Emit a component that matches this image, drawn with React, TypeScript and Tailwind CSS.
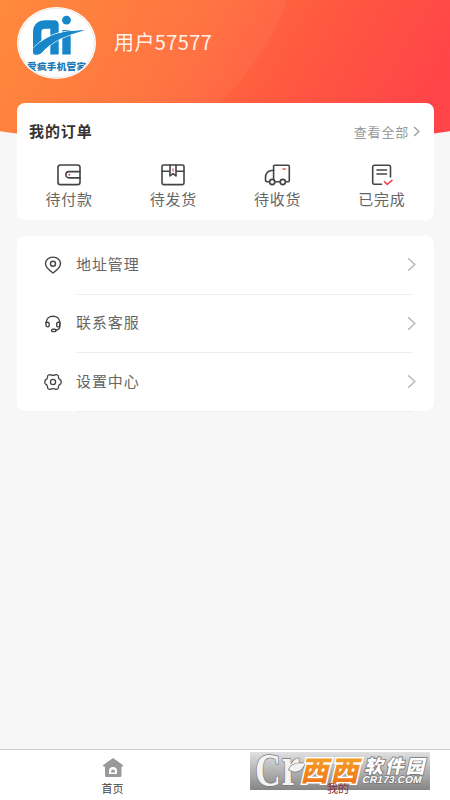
import type { ReactNode } from "react";

interface Item {
  label: string;
  icon: ReactNode;
}

const iconProps = {
  fill: "none",
  stroke: "#444",
  strokeWidth: 1.6,
  strokeLinecap: "round" as const,
  strokeLinejoin: "round" as const,
};

const orders: Item[] = [
  {
    label: "待付款",
    icon: (
      <svg width="26" height="24" viewBox="0 0 26 24" {...iconProps}>
        <rect x="2" y="2" width="22" height="19.6" rx="2.4" />
        <path d="M24 8.600H13a3.100 3.100 0 0 0 0 6.300h11" />
        <circle cx="13.3" cy="11.8" r="1" fill="#e5484d" stroke="none" />
      </svg>
    ),
  },
  {
    label: "待发货",
    icon: (
      <svg width="26" height="24" viewBox="0 0 26 24" {...iconProps}>
        <rect x="2" y="2" width="22" height="19.6" rx="1.6" />
        <path d="M2 8.200h8M16 8.200h8M10 2v11l3-2.400 3 2.400V2" />
        <path d="M13 6v2" stroke="#ef7a7d" />
      </svg>
    ),
  },
  {
    label: "待收货",
    icon: (
      <svg width="27" height="24" viewBox="0 0 27 24" {...iconProps}>
        <path d="M9.600 16.500V3.200a1 1 0 0 1 1-1h13.700a1 1 0 0 1 1 1v14.200a1.400 1.400 0 0 1-1.400 1.400h-1.800M16 18.800h-4.600" />
        <path d="M9.600 7.500H7.400C3.600 8 1.500 11 1.500 14.800v2.500c0 1 .6 1.500 2.500 1.500h1.200" />
        <circle cx="8.2" cy="19" r="2.6" />
        <circle cx="18.8" cy="19" r="2.6" />
        <path d="M19 6h2.200" stroke="#ef5357" />
      </svg>
    ),
  },
  {
    label: "已完成",
    icon: (
      <svg width="24" height="24" viewBox="0 0 24 24" {...iconProps}>
        <path d="M11.500 21.200H4.400a1.700 1.700 0 0 1-1.700-1.700V4a1.700 1.700 0 0 1 1.700-1.700h14.400A1.700 1.700 0 0 1 20.500 4v10" />
        <path d="M7 7h9.500M7 11h9.500" />
        <path d="m14.500 18.800 2.800 2.600 4.700-4" stroke="#ea4a4f" />
      </svg>
    ),
  },
];

const menu: Item[] = [
  {
    label: "地址管理",
    icon: (
      <svg width="18" height="18" viewBox="0 0 18 18" {...iconProps} strokeWidth={1.4}>
        <path d="M9 17C5.800 14.800 1.500 11.500 1.500 7.600 1.500 3.800 4.800 1.100 9 1.100s7.500 2.700 7.500 6.500C16.500 11.500 12.200 14.800 9 17Z" />
        <circle cx="9" cy="7.8" r="2.5" />
      </svg>
    ),
  },
  {
    label: "联系客服",
    icon: (
      <svg width="18" height="18" viewBox="0 0 18 18" {...iconProps} strokeWidth={1.4}>
        <path d="M2.200 8V7.200C2.500 3.600 5.300 1.200 9 1.200s6.500 2.400 6.800 6V11.600c0 2.300-1.500 3.500-4.200 3.700" />
        <path d="M2 7.200h1.600c1.100 0 1.600.6 1.600 1.600v1.600c0 1-.5 1.500-1.500 1.500S2 11.400 2 10.200Z" />
        <path d="M15.900 7.200h-1.600c-1.100 0-1.600.6-1.600 1.600v1.600c0 1 .5 1.500 1.500 1.500s1.700-.5 1.700-1.700Z" />
        <rect x="7.6" y="14.2" width="4.4" height="2.4" rx="1.2" />
      </svg>
    ),
  },
  {
    label: "设置中心",
    icon: (
      <svg width="18" height="18" viewBox="0 0 18 18" {...iconProps} strokeWidth={1.3}>
        <path d="M5.200 1.700c1.100-.5 1.700.7 3.800.7s2.700-1.200 3.800-.7l1.300.8c.8.800-.1 1.900.8 3.200.7 1.100 2.200 1 2.200 2.300v2c0 1.300-1.500 1.200-2.200 2.300-.9 1.300 0 2.400-.8 3.200l-1.300.8c-1.100.5-1.700-.7-3.800-.7s-2.700 1.200-3.800.7l-1.300-.8c-.8-.8.1-1.900-.8-3.200C2.400 11.200.9 11.300.9 10V8c0-1.300 1.500-1.200 2.200-2.300.9-1.300 0-2.400.8-3.200Z" />
        <circle cx="9" cy="9" r="2.6" />
      </svg>
    ),
  },
];

const Chevron = ({ className, width }: { className: string; width: number }) => (
  <svg viewBox="0 0 10 16" fill="none" stroke="currentColor" strokeWidth={width} className={className}>
    <path d="m1.500 1.500 7 6.500-7 6.500" />
  </svg>
);

const Avatar = () => (
  <svg width="79" height="72" viewBox="0 0 79 72" className="shrink-0">
    <defs>
      <clipPath id="avatar">
        <ellipse cx="39.5" cy="36" rx="37.5" ry="34.5" />
      </clipPath>
    </defs>
    <ellipse cx="39.5" cy="36" rx="39.5" ry="36" fill="#fff" />
    <ellipse cx="39.5" cy="36" rx="38" ry="34.7" fill="none" stroke="#e5ddd6" strokeWidth="0.7" />
    <g clipPath="url(#avatar)">
      <g fill="none" stroke="#1787c9" strokeWidth="8.4">
        <path d="M20.200 42V25c0-5 3-7.500 8-7.500h9.300v30" strokeLinejoin="round" />
        <path d="M49.500 23v24.500" />
      </g>
      <circle cx="49.5" cy="13.2" r="4.4" fill="#1787c9" />
      <path d="M16 41.500C27 29 41 23.500 66 22.800" fill="none" stroke="#fff" strokeWidth="0.9" />
      <path d="M16 42C27 29.500 42 23.500 68 23.200 49 28 34 35 24.500 46c-2 2.200-8.500 2.500-8.500 0Z" fill="#1787c9" />
      <path d="M25 46.500C33 37 42 32 54 28" fill="none" stroke="#fff" strokeWidth="0.7" />
      <text x="10" y="62.5" fontSize="9.6" fontWeight="900" textLength="59" fill="#1b78b4">
        爱疯手机管家
      </text>
    </g>
  </svg>
);

const Watermark = () => (
  <svg width="180" height="38" viewBox="0 0 180 38" className="overflow-visible">
    <defs>
      <linearGradient id="shade" x1="0" y1="0" x2="0" y2="1">
        <stop offset="0" stopColor="#e0e0e0" />
        <stop offset="1" stopColor="#858585" />
      </linearGradient>
      <linearGradient id="flame" x1="0" y1="0" x2="0" y2="1">
        <stop offset="0" stopColor="#f6b02f" />
        <stop offset="1" stopColor="#ee6a14" />
      </linearGradient>
    </defs>
    <rect width="180" height="38" fill="url(#shade)" />
    <g fill="#f3f3f3" stroke="#777" strokeWidth="1.6" paintOrder="stroke" fontFamily="Liberation Serif">
      <text x="5" y="33.5" fontSize="47" fontWeight="700" textLength="26" lengthAdjust="spacingAndGlyphs">C</text>
      <text x="31.5" y="33" fontSize="56" fontWeight="700" textLength="18" lengthAdjust="spacingAndGlyphs">r</text>
      <path d="M39 17.500c2-6 8-7 16-6-3 7-9 11-16 6Z" />
    </g>
    <g transform="skewX(-13)" stroke="#fff" paintOrder="stroke" fontWeight="900">
      <g fill="url(#flame)" strokeWidth="3">
        <text x="57" y="29" fontSize="28">西</text>
        <text x="87" y="29" fontSize="28">西</text>
      </g>
      <text x="119" y="21" fontSize="18.5" textLength="60" fill="#fff" stroke="#777" strokeWidth="1.6">软件园</text>
      <text x="119" y="31.5" fontSize="10" textLength="59" fill="#fff" stroke="#777" strokeWidth="1.3" fontFamily="Liberation Sans">CR173.COM</text>
    </g>
  </svg>
);

const App = () => {
  return (
    <div className="flex h-[800px] w-[450px] flex-col overflow-hidden bg-[#f7f7f7] font-['Noto_Sans_CJK_SC',sans-serif] text-[#666]">
      <header className="h-[154px] shrink-0 bg-[radial-gradient(circle_at_40px_-90px,#ffffff0a_262px,transparent_264px),linear-gradient(120deg,#ff8533_0%,#ff6f3a_38%,#ff5741_64%,#ff4548_90%)] [clip-path:ellipse(500px_147px_at_50%_0)]">
        <div className="flex items-start gap-[18px] pt-[7px] pl-[17px]">
          <Avatar />
          <h1 className="pt-[21px] text-[20px] leading-7 tracking-[0.4px] text-[#fff2e9]">用户57577</h1>
        </div>
      </header>

      <main className="relative mr-4 ml-[17px] -mt-[51px] flex flex-1 flex-col gap-4">
        <section className="h-[117px] shrink-0 rounded-lg bg-white">
          <div className="flex h-[60px] items-center justify-between pr-[14px] pb-[3px] pl-3">
            <h2 className="text-[15px] font-bold tracking-[0.9px] text-[#333]">我的订单</h2>
            <button className="flex items-center gap-1 text-[13px] tracking-[0.8px] text-[#999]">
              查看全部
              <Chevron className="h-[11px] w-[7px]" width={1.8} />
            </button>
          </div>
          <div className="grid grid-cols-4">
            {orders.map((order) => (
              <div key={order.label} className="flex flex-col items-center gap-[2px]">
                {order.icon}
                <span className="text-[15px] leading-5 tracking-[0.8px]">{order.label}</span>
              </div>
            ))}
          </div>
        </section>

        <section className="h-[175px] shrink-0 rounded-lg bg-white">
          {menu.map((item) => (
            <div key={item.label} className="flex h-[58.5px] items-center pr-[21px] pl-[27px]">
              {item.icon}
              <div className="ml-[14px] flex h-full flex-1 items-center justify-between border-b border-[#eee]">
                <span className="pb-[2px] text-[15px] tracking-[0.9px]">{item.label}</span>
                <Chevron className="-mr-1 h-[15px] w-[11px] text-[#bbb]" width={1.6} />
              </div>
            </div>
          ))}
        </section>
      </main>

      <nav className="relative flex h-[51px] shrink-0 border-t border-[#ccc] bg-white text-[11px] leading-4 text-[#444]">
        <div className="flex w-[225px] flex-col items-center pt-[7px]">
          <svg width="22" height="22" viewBox="0 0 22 22">
            <path d="M11 1 21.500 8.500 19.500 10v8.500a1.500 1.500 0 0 1-1.500 1.500H4.500A1.500 1.500 0 0 1 3 18.500V10L.5 8.500Z" fill="#999" />
            <path d="M7 17v-3a4 4 0 0 1 8 0v3Z" fill="#fff" />
            <path d="M9 15.500v-1a2 2 0 0 1 4 0v1Z" fill="#999" />
          </svg>
          <span className="mt-px">首页</span>
        </div>
        <div className="absolute top-[2px] left-[250px]">
          <Watermark />
        </div>
        <span className="absolute top-[30px] left-[327px] text-[#8d2f35]">我的</span>
      </nav>
    </div>
  );
};

export default App;
